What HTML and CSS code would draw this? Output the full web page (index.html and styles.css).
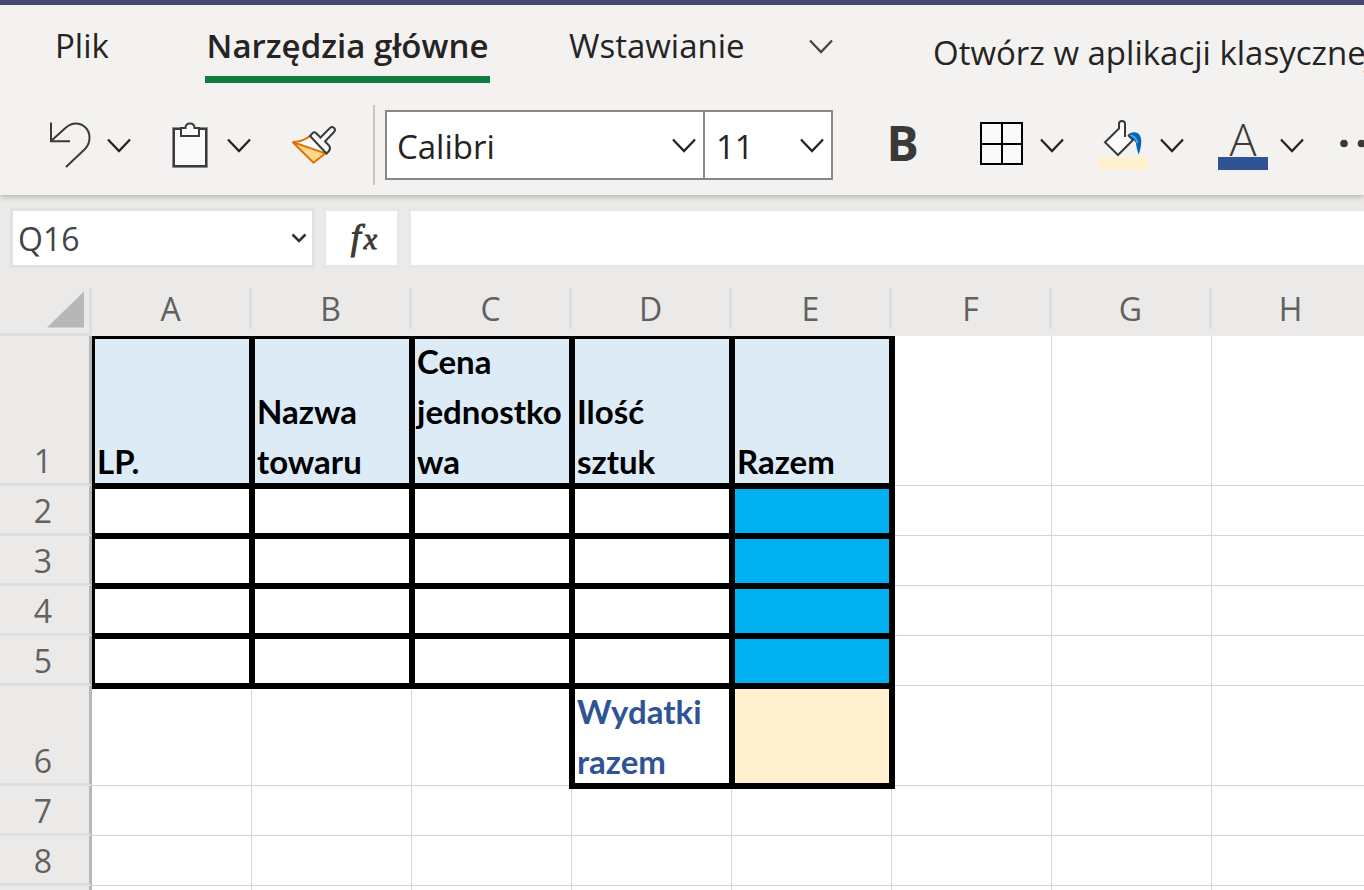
FILE: index.html
```html
<!DOCTYPE html>
<html lang="pl">
<head>
<meta charset="utf-8">
<title>Excel</title>
<meta name="viewport" content="width=device-width, initial-scale=1">
<link rel="stylesheet" href="styles.css">
</head>
<body>
<svg class="defs" aria-hidden="true">
  <symbol id="chevron" viewBox="0 0 24 24"><path d="M1 6.500 12 18 23 6.500" fill="none" stroke="currentColor" stroke-width="2.300"/></symbol>
</svg>
<header class="ribbon">
  <nav class="tabs">
    <button class="tab">Plik</button>
    <button class="tab active">Narzędzia główne</button>
    <button class="tab">Wstawianie</button>
    <button class="tab more" aria-label="Więcej kart"><svg class="chev"><use href="#chevron"/></svg></button>
    <a class="open-app" href="#">Otwórz w aplikacji klasycznej</a>
  </nav>
  <div class="toolbar">
    <div class="group">
      <button class="icon" aria-label="Cofnij"><svg viewBox="45 105 50 80"><g fill="none" stroke="#3b3a39" stroke-width="2"><path d="M51 122.500V141.300H70"/><path d="M51 141 66 127.500C69 125 72 123.500 75.500 123.500 83.500 123.500 89.500 129.500 89.500 137.500 89.500 142.500 88 146 85 149L66 167"/></g></svg></button>
      <button class="drop" aria-label="Opcje cofania"><svg class="chev"><use href="#chevron"/></svg></button>
    </div>
    <div class="group">
      <button class="icon" aria-label="Wklej"><svg viewBox="165 105 50 80"><path d="M172.500 127.500h35v40h-35z" fill="#fafafa" stroke="#8b8a89" stroke-width="1"/><path d="M174 129h32v37h-32z" fill="#fafafa" stroke="#3b3a39" stroke-width="2"/><path d="M181 128h4.500c0-3 2-4.500 4.500-4.500s4.500 1.500 4.500 4.500h4.500v8h-18z" fill="#fafafa" stroke="#3b3a39" stroke-width="2"/></svg></button>
      <button class="drop" aria-label="Opcje wklejania"><svg class="chev"><use href="#chevron"/></svg></button>
    </div>
    <button class="icon brush" aria-label="Malarz formatów"><svg viewBox="285 105 54 80"><path d="M293 142C300 142 305 140 310 136L325 153 313.500 162.500z" fill="#fafafa"/><path d="M293 142.500 325 153.300 313.500 162.500z" fill="#fcd98b"/><path d="M292.500 142C299 142 305 140 310 136M325.500 153.300 313.500 162.700 292.500 142 325.500 153.300" fill="none" stroke="#e07000" stroke-width="1.900"/><path d="M310 136 313 132.700Q314.500 131.700 316 133L320.500 137.500 330 128Q332 126 334 128 336 130 334 132L325 141.500 329 145.500Q331 148 329 151L326.500 153.500z" fill="#fafafa" stroke="#3b3a39" stroke-width="2"/></svg></button>
    <div class="font-group">
      <div class="combo font"><select aria-label="Czcionka"><option>Calibri</option></select><svg class="chev"><use href="#chevron"/></svg></div>
      <div class="combo size"><select aria-label="Rozmiar czcionki"><option>11</option></select><svg class="chev"><use href="#chevron"/></svg></div>
    </div>
    <button class="bold">B</button>
    <div class="group">
      <button class="icon" aria-label="Obramowania"><svg viewBox="978 105 50 80"><path d="M981 123h41v41h-41zM1002 123v41M981 144h41" fill="#fafafa" stroke="#000" stroke-width="2"/></svg></button>
      <button class="drop" aria-label="Opcje obramowania"><svg class="chev"><use href="#chevron"/></svg></button>
    </div>
    <div class="group">
      <button class="icon" aria-label="Kolor wypełnienia"><svg viewBox="1098 105 50 80"><path d="M1128 134.500Q1131 132 1135 132.300C1139.500 133 1141.500 137 1141.300 142 1141 147 1140 151 1138.700 154.500 1137.500 151 1136.500 148 1136 143L1132.500 138z" fill="#0066b8"/><path d="M1130 136Q1135 134.500 1137.500 143" fill="none" stroke="#5db2ee" stroke-width="1.500"/><path d="M1119 128.500 1105 142.300 1118 155 1133 140 1125 133V124Q1125 121 1122 121 1119 121 1119 124z" fill="#fafafa"/><path d="M1125 137V124Q1125 121 1122 121 1119 121 1119 124V128.500L1105 142.300 1118 155 1133 140 1128 135" fill="none" stroke="#3b3a39" stroke-width="2"/><path d="M1098 157h50v13h-50z" fill="#fff1ce"/></svg></button>
      <button class="drop" aria-label="Opcje wypełnienia"><svg class="chev"><use href="#chevron"/></svg></button>
    </div>
    <div class="group">
      <button class="icon color" aria-label="Kolor czcionki"><span class="letter">A</span><span class="swatch"></span></button>
      <button class="drop" aria-label="Opcje koloru czcionki"><svg class="chev"><use href="#chevron"/></svg></button>
    </div>
    <button class="icon" aria-label="Więcej opcji"><svg viewBox="1338 105 50 80"><g fill="#3b3a39"><circle cx="1344" cy="143.500" r="3.800"/><circle cx="1361.500" cy="143.500" r="3.800"/><circle cx="1379" cy="143.500" r="3.800"/></g></svg></button>
  </div>
</header>
<section class="formula-bar">
  <div class="combo name"><select aria-label="Pole nazwy"><option>Q16</option></select><svg class="chev" viewBox="0 0 24 24"><path d="M5.500 8.500 12 15 18.500 8.500" fill="none" stroke="#323130" stroke-width="2.600"/></svg></div>
  <button class="fx" aria-label="Wstaw funkcję"><span class="f">f</span><span class="x">x</span></button>
  <input class="formula" type="text" aria-label="Pasek formuły">
</section>
<main class="sheet">
<table>
  <colgroup><col class="c-head"><col class="c"><col class="c"><col class="c"><col class="c"><col class="c"><col class="c"><col class="c"><col></colgroup>
  <thead>
    <tr><td class="corner"><svg viewBox="0 0 38 37"><path d="M38 0V37H0z" fill="#b7b7b7"/></svg></td><th>A</th><th>B</th><th>C</th><th>D</th><th>E</th><th>F</th><th>G</th><th>H</th></tr>
  </thead>
  <tbody>
    <tr class="tall"><th>1</th><td class="box title">LP.</td><td class="box title">Nazwa towaru</td><td class="box title">Cena jednostkowa</td><td class="box title">Ilość sztuk</td><td class="box title">Razem</td><td></td><td></td><td></td></tr>
    <tr><th>2</th><td class="box"></td><td class="box"></td><td class="box"></td><td class="box"></td><td class="box blue"></td><td></td><td></td><td></td></tr>
    <tr><th>3</th><td class="box"></td><td class="box"></td><td class="box"></td><td class="box"></td><td class="box blue"></td><td></td><td></td><td></td></tr>
    <tr><th>4</th><td class="box"></td><td class="box"></td><td class="box"></td><td class="box"></td><td class="box blue"></td><td></td><td></td><td></td></tr>
    <tr><th>5</th><td class="box"></td><td class="box"></td><td class="box"></td><td class="box"></td><td class="box blue"></td><td></td><td></td><td></td></tr>
    <tr class="medium"><th>6</th><td></td><td></td><td></td><td class="box total">Wydatki razem</td><td class="box cream"></td><td></td><td></td><td></td></tr>
    <tr><th>7</th><td></td><td></td><td></td><td></td><td></td><td></td><td></td><td></td></tr>
    <tr><th>8</th><td></td><td></td><td></td><td></td><td></td><td></td><td></td><td></td></tr>
    <tr><th></th><td></td><td></td><td></td><td></td><td></td><td></td><td></td><td></td></tr>
  </tbody>
</table>
</main>
</body>
</html>
```
FILE: styles.css
```css
* { box-sizing: border-box; }
html, body { height: 100%; }
body {
  margin: 0;
  display: flex;
  flex-direction: column;
  overflow: hidden;
  background: #ebeae9;
  color: #252423;
  font-family: "Open Sans", "Noto Sans", sans-serif;
  font-size: 33px;
}
button, select, input {
  font: inherit;
  color: inherit;
  margin: 0;
  padding: 0;
  border: 0;
  border-radius: 0;
  background: none;
}
.defs { display: none; }
.chev { width: 24px; height: 24px; display: block; }

/* Ribbon */
.ribbon {
  flex: none;
  position: relative;
  border-top: 5px solid #464775;
  background: #f3f2f1;
  padding-bottom: 10px;
  box-shadow: 0 1px 6px rgba(0, 0, 0, 0.3);
}
.tabs {
  display: grid;
  grid-template-columns: 150px 364px 240px 124px 1fr;
  height: 78px;
  padding-left: 55px;
  margin-bottom: 22px;
  justify-items: start;
  white-space: nowrap;
}
.tab {
  height: 78px;
  border-bottom: 7px solid transparent;
  padding-top: 10px;
  line-height: 44px;
}
.tab.active { min-width: 285px; border-color: #107c41; font-weight: 600; }
.tab.more { color: #484644; }
.open-app { color: inherit; text-decoration: none; line-height: 44px; padding-top: 26px; }

.toolbar { display: flex; gap: 34px; height: 80px; padding-left: 45px; }
.group { display: flex; flex: none; gap: 12px; }
.icon { flex: none; width: 50px; height: 80px; }
.icon svg { display: block; width: 100%; height: 80px; }
.icon.brush { width: 54px; }
.drop { width: 24px; height: 80px; }
.font-group {
  flex: none;
  display: flex;
  align-items: center;
  border-left: 2px solid #c8c6c4;
  padding-left: 10px;
}
.combo {
  display: grid;
  align-items: center;
  background: #fff;
}
.combo select {
  grid-area: 1 / 1;
  width: 100%;
  height: 100%;
  appearance: none;
}
.combo .chev { grid-area: 1 / 1; justify-self: end; pointer-events: none; }
.font, .size { height: 70px; border: 2px solid #8a8886; }
.combo.font { width: 320px; padding-right: 7px; }
.combo.size { width: 128px; border-left: 0; padding-right: 7px; }
.font select { padding: 2px 0 0 10px; }
.size select { padding: 2px 0 0 11px; }
.bold { flex: none; width: 77px; padding: 0 6px 4px 0; font-size: 48px; font-weight: 700; color: #3b3a39; line-height: 74px; }
.color { display: flex; flex-direction: column; }
.letter { width: 50px; height: 52px; font-size: 45px; font-weight: 300; line-height: 68px; color: #3b3a39; }
.swatch { width: 50px; height: 13px; background: #2f5496; }

/* Formula bar */
.formula-bar {
  flex: none;
  display: flex;
  gap: 8px;
  padding: 13px 0 20px 10px;
  color: #444;
}
.combo.name { width: 305px; height: 60px; border: 3px solid #e1e1e1; padding-right: 1px; font-size: 32px; }
.name select { padding-left: 5px; }
.fx {
  width: 77px;
  height: 60px;
  border: 3px solid #e6e7e8;
  background: #fff;
  padding-left: 5px;
  color: #3b3a39;
  font-family: "Liberation Serif", serif;
  font-style: italic;
  font-size: 36px;
  line-height: 40px;
  -webkit-text-stroke: 1px #3b3a39;
}
.x { margin-left: 3px; font-size: 30px; }
.formula { flex: 1; min-width: 0; height: 60px; border: 3px solid #e6e7e8; border-right: 0; background: #fff; }

/* Sheet */
.sheet { flex: 1; min-height: 0; overflow: hidden; background: #fff; }
table { width: 100%; table-layout: fixed; border-collapse: separate; border-spacing: 0; }
.c-head { width: 92px; }
.c { width: 160px; }
td, th { padding: 0; }
thead { position: relative; z-index: 2; background: #ebeae9; }
thead th {
  height: 48px;
  padding: 0 3px 6px 0;
  background: linear-gradient(#dedede, #dedede) top right / 3px 41px no-repeat;
  color: #616161;
  font-size: 32px;
  font-weight: 400;
  line-height: 42px;
}
thead th:last-child { background: none; padding: 0 0 6px 5px; }
thead .corner { border-right: 3px solid #dedede; border-bottom: 3px solid #dedede; padding: 3px 5px 5px 47px; }
.corner svg { display: block; width: 37px; height: 37px; }
tbody tr { height: 50px; }
tbody tr.tall { height: 150px; }
tbody tr.medium { height: 100px; }
tbody th {
  position: relative;
  z-index: 1;
  background: #ebeae9;
  border-right: 3px solid #b7b7b7;
  border-bottom: 3px solid #dedede;
  padding-right: 3px;
  vertical-align: bottom;
  color: #616161;
  font-size: 32px;
  font-weight: 400;
  line-height: 44px;
}
tbody td {
  border-right: 1px solid #d4d4d4;
  border-bottom: 1px solid #d4d4d4;
  vertical-align: bottom;
  font-family: Lato, sans-serif;
  font-size: 33px;
  font-weight: 700;
  line-height: 50px;
}
tbody td:last-child { border-right: 0; }
/* Thick outline straddles the cell edge: half inside, half outside */
tbody td.box {
  position: relative;
  border: 0;
  padding: 0 5px;
  box-shadow: inset 0 0 0 3px #000, 0 0 0 3px #000;
}
tbody td.title { background: #ddebf7; color: #000; word-break: break-word; }
tbody td.total { color: #2f5496; }
tbody td.blue { background: #00b0f0; }
tbody td.cream { background: #fff1ce; }
```
